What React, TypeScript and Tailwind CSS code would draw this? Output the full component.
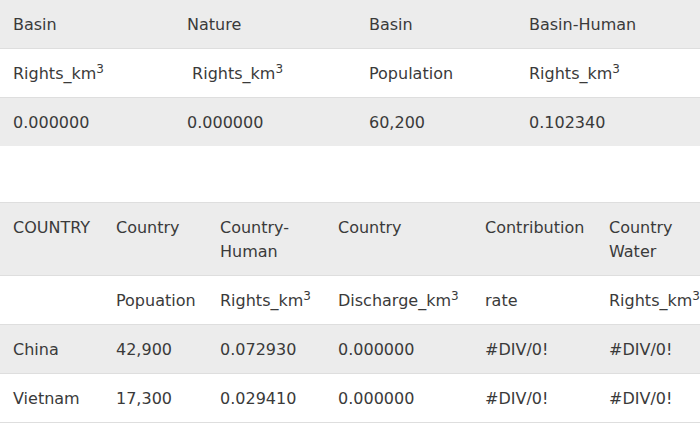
import React from 'react'

const Km3 = ({ label }: { label: string }) => (
  <>
    {label}_km<sup>3</sup>
  </>
)

const basinHead = ['Basin', 'Nature', 'Basin', 'Basin-Human']
const basinWidths = ['w-[174px]', 'w-[182px]', 'w-[160px]', 'w-[184px]']

const countryWidths = ['w-[103px]', 'w-[104px]', 'w-[118px]', 'w-[147px]', 'w-[124px]', 'w-[130px]']

const countries = [
  ['China', '42,900', '0.072930', '0.000000', '#DIV/0!', '#DIV/0!'],
  ['Vietnam', '17,300', '0.029410', '0.000000', '#DIV/0!', '#DIV/0!'],
]

const cell = 'pl-[13px] pr-2 pt-[13px] pb-[11px] text-left align-top font-normal leading-6'

export default function App() {
  return (
    <div className="w-[700px] h-[429px] overflow-hidden bg-white text-[16px] text-[#3a3a3a] font-['DejaVu_Sans',_Verdana,_sans-serif]">
      <table className="table-fixed border-collapse w-[700px]">
        <colgroup>
          {basinWidths.map((w, i) => (
            <col key={i} className={w} />
          ))}
        </colgroup>
        <tbody>
          <tr className="bg-[#ececec]">
            {basinHead.map((h, i) => (
              <td key={i} className={cell}>{h}</td>
            ))}
          </tr>
          <tr className="bg-white border-t border-[#dedede]">
            <td className={cell}><Km3 label="Rights" /></td>
            <td className={cell}>&nbsp;<Km3 label="Rights" /></td>
            <td className={cell}>Population</td>
            <td className={cell}><Km3 label="Rights" /></td>
          </tr>
          <tr className="bg-[#ececec] border-t border-[#dedede]">
            <td className={cell}>0.000000</td>
            <td className={cell}>0.000000</td>
            <td className={cell}>60,200</td>
            <td className={cell}>0.102340</td>
          </tr>
        </tbody>
      </table>

      <div className="h-[56px]" />

      <table className="table-fixed border-collapse w-[726px]">
        <colgroup>
          {countryWidths.map((w, i) => (
            <col key={i} className={w} />
          ))}
        </colgroup>
        <tbody>
          <tr className="bg-[#ececec] border-t border-[#dedede]">
            <td className={cell}>COUNTRY</td>
            <td className={cell}>Country</td>
            <td className={cell}>Country-<br />Human</td>
            <td className={cell}>Country</td>
            <td className={cell}>Contribution</td>
            <td className={cell}>Country<br />Water</td>
          </tr>
          <tr className="bg-white border-t border-[#dedede]">
            <td className={cell}></td>
            <td className={cell}>Popuation</td>
            <td className={cell}><Km3 label="Rights" /></td>
            <td className={cell}><Km3 label="Discharge" /></td>
            <td className={cell}>rate</td>
            <td className={`${cell} whitespace-nowrap`}><Km3 label="Rights" /></td>
          </tr>
          {countries.map((row, r) => (
            <tr
              key={r}
              className={`${r % 2 === 0 ? 'bg-[#ececec]' : 'bg-white'} border-t border-b border-[#dedede]`}
            >
              {row.map((v, i) => (
                <td key={i} className={cell}>{v}</td>
              ))}
            </tr>
          ))}
        </tbody>
      </table>
    </div>
  )
}
